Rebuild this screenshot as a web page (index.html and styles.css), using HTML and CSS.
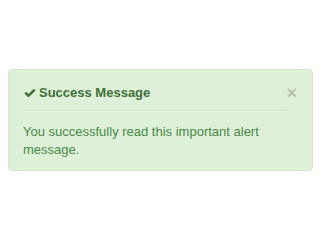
FILE: index.html
```html
<!DOCTYPE html>
<html lang="en">
<head>
    <meta charset="UTF-8">
    <title>Success Message</title>
    <link rel="stylesheet" href="styles.css">
</head>
<body>
    <div class="alert alert-success">
        <button class="close" type="button">&times;</button>
        <h4 class="alert-heading">
            <svg class="icon-ok" viewBox="0 0 12 10" width="12" height="10">
                <path d="M0.4 5.4 L2.1 3.7 L4.5 6.1 L9.9 0.7 L11.6 2.4 L4.5 9.5 Z" fill="currentColor"/>
            </svg>
            Success Message
        </h4>
        <p class="alert-body">You successfully read this important alert message.</p>
    </div>
</body>
</html>
```

FILE: styles.css
```css
body {
    margin: 0;
    padding: 69px 7px 0 8px;
    font-family: "Liberation Sans", Arial, sans-serif;
    font-size: 13px;
    background: #fff;
}
.alert {
    position: relative;
    padding: 0 14px;
    background-color: #dff0d8;
    border: 1px solid #d3e8c8;
    border-radius: 4px;
    color: #468847;
}
.alert-heading {
    margin: 0 11px 0 0;
    padding: 14px 0 8px 1px;
    font-size: 13px;
    line-height: 18px;
    font-weight: bold;
    color: #3d7038;
    display: flex;
    align-items: center;
    gap: 3px;
    border-bottom: 1px solid #cde3c1;
    box-shadow: 0 1px 0 rgba(255, 255, 255, 0.45);
}
.icon-ok {
    display: block;
}
.alert-body {
    margin: 0;
    padding: 12px 35px 11px 0;
    line-height: 18px;
}
.close {
    position: absolute;
    top: 14px;
    right: 15px;
    padding: 0;
    border: none;
    background: none;
    font-family: "Liberation Sans", Arial, sans-serif;
    font-size: 18px;
    font-weight: bold;
    line-height: 18px;
    color: #000;
    opacity: 0.2;
    cursor: pointer;
}
```
